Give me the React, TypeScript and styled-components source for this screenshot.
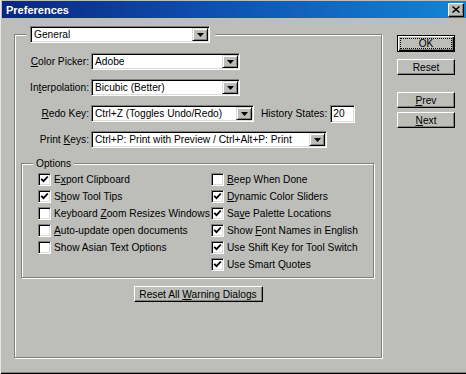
import React from "react";
import styled, { createGlobalStyle } from "styled-components";

const face = "#bdbeba";

const GlobalStyle = createGlobalStyle`
  html, body {
    margin: 0;
    padding: 0;
    background: ${face};
  }
`;

const Window = styled.div`
  width: 466px;
  height: 374px;
  box-sizing: border-box;
  background: ${face};
  border-left: 1px solid #e8e8e8;
  box-shadow: inset 0 -1px 0 #000, inset 0 -2px 0 #808080;
  display: flex;
  flex-direction: column;
  font-family: "Liberation Sans", Arial, sans-serif;
  font-size: 10.2px;
  color: #000;
`;

const TitleBar = styled.div`
  height: 17px;
  margin: 1px 0 0 1px;
  display: flex;
  align-items: center;
  justify-content: space-between;
  background: linear-gradient(to right, #0a2680 0%, #0f4fb0 45%, #1286d2 100%);
`;

const Title = styled.span`
  color: #fff;
  font-weight: bold;
  font-size: 11px;
  padding-left: 4px;
`;

const CloseButton = styled.div`
  width: 16px;
  height: 14px;
  box-sizing: border-box;
  margin-right: 2px;
  background: ${face};
  border: 1px solid;
  border-color: #fff #000 #000 #fff;
  box-shadow: inset -1px -1px 0 #808080;
  display: flex;
  align-items: center;
  justify-content: center;
`;

const Body = styled.div`
  display: flex;
  padding: 8px 0 0 13px;
`;

const Frame = styled.fieldset`
  margin: 0;
  padding: 10px 0 0 0;
  width: 368px;
  height: 332px;
  box-sizing: border-box;
  border: 1px solid #808080;
  box-shadow: 1px 1px 0 #fff, inset 1px 1px 0 #fff;
  min-inline-size: 0;
`;

const FrameLegend = styled.legend`
  margin-left: 11px;
  padding: 0 5px 0 4px;
  background: ${face};
`;

const Rows = styled.div`
  display: flex;
  flex-direction: column;
  gap: 9px;
`;

const Row = styled.div`
  display: flex;
  align-items: center;
  height: 17px;
`;

const Label = styled.span`
  width: 74px;
  margin-right: 2px;
  text-align: right;
  white-space: nowrap;
`;

const Sunken = styled.div<{ $w: number; $h?: number }>`
  width: ${(p) => p.$w}px;
  height: ${(p) => p.$h ?? 17}px;
  flex-shrink: 0;
  box-sizing: border-box;
  background: #fff;
  border: 1px solid;
  border-color: #808080 #fff #fff #808080;
  box-shadow: inset 1px 1px 0 #000, inset -1px -1px 0 #dcdcdc;
  display: flex;
  align-items: center;
  line-height: 13px;
`;

const SelectText = styled.span`
  flex: 1;
  padding-left: 3px;
  white-space: nowrap;
  overflow: hidden;
`;

const ArrowButton = styled.div`
  width: 16px;
  height: 13px;
  flex-shrink: 0;
  box-sizing: border-box;
  margin-right: 1px;
  background: ${face};
  border: 1px solid;
  border-color: #dcdcdc #000 #000 #dcdcdc;
  box-shadow: inset 1px 1px 0 #fff, inset -1px -1px 0 #808080;
  display: flex;
  align-items: center;
  justify-content: center;
`;

const SideLabel = styled.span`
  margin-left: 7px;
  margin-right: 3px;
  white-space: nowrap;
`;

const InputText = styled.span`
  padding-left: 2px;
`;

const Group = styled.fieldset`
  margin: 9px 0 0 6px;
  padding: 1px 0 0 16px;
  width: 353px;
  height: 121px;
  box-sizing: border-box;
  border: 1px solid #808080;
  box-shadow: 1px 1px 0 #fff, inset 1px 1px 0 #fff;
  display: flex;
  min-inline-size: 0;
`;

const GroupLegend = styled.legend`
  margin-left: -5px;
  padding: 0 3px;
  line-height: 13px;
  background: ${face};
`;

const CheckColumn = styled.div<{ $w?: number }>`
  display: flex;
  flex-direction: column;
  width: ${(p) => (p.$w ? `${p.$w}px` : "auto")};
  flex-shrink: 0;
`;

const CheckRow = styled.div`
  display: flex;
  align-items: center;
  height: 17px;
  gap: 3px;
  white-space: nowrap;
`;

const Box = styled.div`
  width: 13px;
  height: 13px;
  flex-shrink: 0;
  box-sizing: border-box;
  background: #fff;
  border: 1px solid;
  border-color: #808080 #fff #fff #808080;
  box-shadow: inset 1px 1px 0 #000, inset -1px -1px 0 #dcdcdc;
  display: flex;
  align-items: center;
  justify-content: center;
`;

const Button = styled.div<{ $w: number; $h?: number; $default?: boolean }>`
  width: ${(p) => p.$w}px;
  height: ${(p) => p.$h ?? 16}px;
  box-sizing: border-box;
  background: ${face};
  border: 1px solid;
  border-color: ${(p) => (p.$default ? "#000" : "#fff #000 #000 #fff")};
  box-shadow: ${(p) =>
    p.$default
      ? "inset 1px 1px 0 #fff, inset -1px -1px 0 #000, inset -2px -2px 0 #808080"
      : "inset -1px -1px 0 #808080"};
  display: flex;
  align-items: center;
  justify-content: center;
  white-space: nowrap;
  line-height: 13px;
`;

const Focus = styled.div`
  width: 50px;
  height: 9px;
  border: 1px dotted #000;
  display: flex;
  align-items: center;
  justify-content: center;
`;

const ResetRow = styled.div`
  display: flex;
  justify-content: center;
  margin-top: 8px;
`;

const Side = styled.div`
  margin-left: 15px;
  padding-top: 9px;
  display: flex;
  flex-direction: column;
`;

const Spacer = styled.div<{ $h: number }>`
  height: ${(p) => p.$h}px;
`;

const Arrow = () => (
  <svg width="7" height="4" viewBox="0 0 7 4">
    <polygon points="0,0 7,0 3.5,4" fill="#000" />
  </svg>
);

const Check = () => (
  <svg width="9" height="9" viewBox="0 0 9 9">
    <polyline points="1.2,3.8 3.5,6.2 7.8,1.5" fill="none" stroke="#000" strokeWidth="1.8" />
  </svg>
);

const Select = ({ w, children }: { w: number; children: React.ReactNode }) => (
  <Sunken $w={w}>
    <SelectText>{children}</SelectText>
    <ArrowButton>
      <Arrow />
    </ArrowButton>
  </Sunken>
);

const CheckItem = ({ on, children }: { on?: boolean; children: React.ReactNode }) => (
  <CheckRow>
    <Box>{on && <Check />}</Box>
    <span>{children}</span>
  </CheckRow>
);

export default function App() {
  return (
    <>
      <GlobalStyle />
      <Window>
        <TitleBar>
          <Title>Preferences</Title>
          <CloseButton>
            <svg width="8" height="7" viewBox="0 0 8 7">
              <path d="M0.5 0.5 L7.5 6.5 M7.5 0.5 L0.5 6.5" stroke="#000" strokeWidth="1.5" />
            </svg>
          </CloseButton>
        </TitleBar>
        <Body>
          <Frame>
            <FrameLegend>
              <Select w={180}>General</Select>
            </FrameLegend>
            <Rows>
              <Row>
                <Label>
                  <u>C</u>olor Picker:
                </Label>
                <Select w={149}>Adobe</Select>
              </Row>
              <Row>
                <Label>
                  In<u>t</u>erpolation:
                </Label>
                <Select w={149}>Bicubic (Better)</Select>
              </Row>
              <Row>
                <Label>
                  <u>R</u>edo Key:
                </Label>
                <Select w={163}>Ctrl+Z (Toggles Undo/Redo)</Select>
                <SideLabel>History States:</SideLabel>
                <Sunken $w={25} $h={18}>
                  <InputText>20</InputText>
                </Sunken>
              </Row>
              <Row>
                <Label>
                  Print <u>K</u>eys:
                </Label>
                <Select w={236}>Ctrl+P: Print with Preview / Ctrl+Alt+P: Print</Select>
              </Row>
            </Rows>
            <Group>
              <GroupLegend>Options</GroupLegend>
              <CheckColumn $w={173}>
                <CheckItem on>
                  E<u>x</u>port Clipboard
                </CheckItem>
                <CheckItem on>
                  S<u>h</u>ow Tool Tips
                </CheckItem>
                <CheckItem>
                  Keyboard <u>Z</u>oom Resizes Windows
                </CheckItem>
                <CheckItem>
                  <u>A</u>uto-update open documents
                </CheckItem>
                <CheckItem>Show Asian Text Options</CheckItem>
              </CheckColumn>
              <CheckColumn>
                <CheckItem>
                  <u>B</u>eep When Done
                </CheckItem>
                <CheckItem on>
                  <u>D</u>ynamic Color Sliders
                </CheckItem>
                <CheckItem on>
                  Sa<u>v</u>e Palette Locations
                </CheckItem>
                <CheckItem on>
                  Show <u>F</u>ont Names in English
                </CheckItem>
                <CheckItem on>Use Shift Key for Tool Switch</CheckItem>
                <CheckItem on>Use Smart Quotes</CheckItem>
              </CheckColumn>
            </Group>
            <ResetRow>
              <Button $w={129}>
                <span>
                  Reset All <u>W</u>arning Dialogs
                </span>
              </Button>
            </ResetRow>
          </Frame>
          <Side>
            <Button $w={58} $h={17} $default>
              <Focus>OK</Focus>
            </Button>
            <Spacer $h={7} />
            <Button $w={58}>Reset</Button>
            <Spacer $h={17} />
            <Button $w={58}>
              <span>
                <u>P</u>rev
              </span>
            </Button>
            <Spacer $h={4} />
            <Button $w={58}>
              <span>
                <u>N</u>ext
              </span>
            </Button>
          </Side>
        </Body>
      </Window>
    </>
  );
}
